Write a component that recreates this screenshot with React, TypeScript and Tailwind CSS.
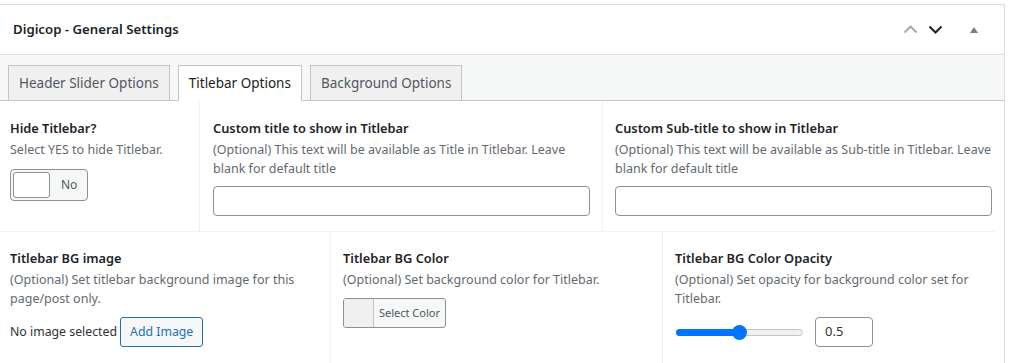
import React from 'react';

const font = { fontFamily: '"Noto Sans", "Open Sans", sans-serif' };

function FieldTitle({ children }: { children: React.ReactNode }) {
  return <div className="text-[12.8px] font-semibold leading-[18px] text-[#1d2327]">{children}</div>;
}

function FieldDesc({ children }: { children: React.ReactNode }) {
  return <div className="mt-[3px] text-[12.5px] leading-[19px] text-[#646970]">{children}</div>;
}

export default function App() {
  const tabs = ['Header Slider Options', 'Titlebar Options', 'Background Options'];
  const activeTab = 'Titlebar Options';

  return (
    <div className="h-[363px] w-[1013px] overflow-hidden bg-white pt-[4px]" style={font}>
      <div className="w-[1005px] border-t border-r border-[#dcdcde]">
        {/* header */}
        <div className="flex h-[50px] items-center justify-between border-b border-[#dcdcde] pl-[13px] pr-[26px]">
          <span className="text-[13.2px] font-semibold text-[#1d2327]">Digicop - General Settings</span>
          <div className="flex items-center">
            <svg width="15" height="9" viewBox="0 0 15 9" className="mr-[10px]">
              <path d="M1.5 7.5 L7.5 1.5 L13.5 7.5" fill="none" stroke="#a7aaad" strokeWidth="2" />
            </svg>
            <svg width="15" height="9" viewBox="0 0 15 9" className="mr-[27px]">
              <path d="M1.5 1.5 L7.5 7.5 L13.5 1.5" fill="none" stroke="#1d2327" strokeWidth="2" />
            </svg>
            <svg width="8" height="6" viewBox="0 0 8 6">
              <path d="M0 6 L4 0 L8 6 Z" fill="#787c82" />
            </svg>
          </div>
        </div>

        {/* tabs */}
        <div className="flex gap-[8px] border-b border-[#c3c4c7] bg-[#f6f7f7] pl-[8px] pt-[10px]">
          {tabs.map((tab) => (
            <div
              key={tab}
              className={`-mb-px flex h-[36px] items-center border border-[#c3c4c7] px-[10px] text-[13.5px] ${
                tab == activeTab
                  ? 'border-b-white bg-white text-[#1d2327]'
                  : 'bg-[#f0f0f1] text-[#50575e]'
              }`}
            >
              {tab}
            </div>
          ))}
        </div>

        {/* row 1 */}
        <div className="flex w-[994px] border-b border-[#f0f0f1]">
          <div className="w-[200px] border-r border-[#f0f0f1] pl-[10px] pt-[18px] pb-[14px]">
            <FieldTitle>Hide Titlebar?</FieldTitle>
            <FieldDesc>Select YES to hide Titlebar.</FieldDesc>
            <div className="mt-[10px] flex h-[32px] w-[78px] items-center rounded-[4px] border border-[#8c8f94] bg-[#f6f7f7] pl-[2px]">
              <div className="h-[26px] w-[37px] rounded-[3px] border border-[#8c8f94] bg-white" />
              <span className="ml-[11px] text-[12px] text-[#50575e]">No</span>
            </div>
          </div>
          <div className="w-[403px] border-r border-[#f0f0f1] pl-[13px] pr-[12px] pt-[18px] pb-[15px]">
            <FieldTitle>Custom title to show in Titlebar</FieldTitle>
            <FieldDesc>(Optional) This text will be available as Title in Titlebar. Leave blank for default title</FieldDesc>
            <input className="mt-[8px] h-[30px] w-full rounded-[4px] border border-[#8c8f94] bg-white" />
          </div>
          <div className="flex-1 pl-[12px] pt-[18px] pb-[15px]">
            <FieldTitle>Custom Sub-title to show in Titlebar</FieldTitle>
            <FieldDesc>(Optional) This text will be available as Sub-title in Titlebar. Leave blank for default title</FieldDesc>
            <input className="mt-[8px] h-[30px] w-[377px] rounded-[4px] border border-[#8c8f94] bg-white" />
          </div>
        </div>

        {/* row 2 */}
        <div className="flex w-[994px] border-b border-[#f0f0f1]">
          <div className="w-[331px] border-r border-[#f0f0f1] pl-[10px] pr-[20px] pt-[17px] pb-[16px]">
            <FieldTitle>Titlebar BG image</FieldTitle>
            <FieldDesc>(Optional) Set titlebar background image for this page/post only.</FieldDesc>
            <div className="mt-[9px] flex items-center">
              <span className="text-[12.3px] text-[#2c3338]">No image selected</span>
              <button className="ml-[3px] h-[30px] rounded-[3px] border border-[#2271b1] bg-[#f6f7f7] px-[9px] text-[12.3px] text-[#2271b1]">
                Add Image
              </button>
            </div>
          </div>
          <div className="w-[332px] border-r border-[#f0f0f1] pl-[12px] pt-[17px]">
            <FieldTitle>Titlebar BG Color</FieldTitle>
            <FieldDesc>(Optional) Set background color for Titlebar.</FieldDesc>
            <div className="mt-[9px] flex h-[30px] w-[103px] overflow-hidden rounded-[3px] border border-[#8c8f94] bg-[#f6f7f7]">
              <div className="w-[30px] border-r border-[#c3c4c7] bg-[#f0f0f1]" />
              <span className="flex flex-1 items-center justify-center text-[11px] text-[#50575e]">Select Color</span>
            </div>
          </div>
          <div className="flex-1 pl-[12px] pt-[17px]">
            <FieldTitle>Titlebar BG Color Opacity</FieldTitle>
            <FieldDesc>(Optional) Set opacity for background color set for Titlebar.</FieldDesc>
            <div className="mt-[9px] flex items-center">
              <div className="relative ml-[1px] h-[7px] w-[127px] rounded-full border border-[#c3c4c7] bg-[#efefef]">
                <div className="absolute left-[-1px] top-[-1px] h-[7px] w-[64px] rounded-full bg-[#0075ff]" />
                <div className="absolute left-[55px] top-[-5px] h-[15px] w-[15px] rounded-full bg-[#0075ff]" />
              </div>
              <div className="ml-[12px] flex h-[30px] w-[58px] items-center rounded-[4px] border border-[#8c8f94] bg-white pl-[9px] text-[13px] text-[#2c3338]">
                0.5
              </div>
            </div>
          </div>
        </div>
      </div>
    </div>
  );
}
